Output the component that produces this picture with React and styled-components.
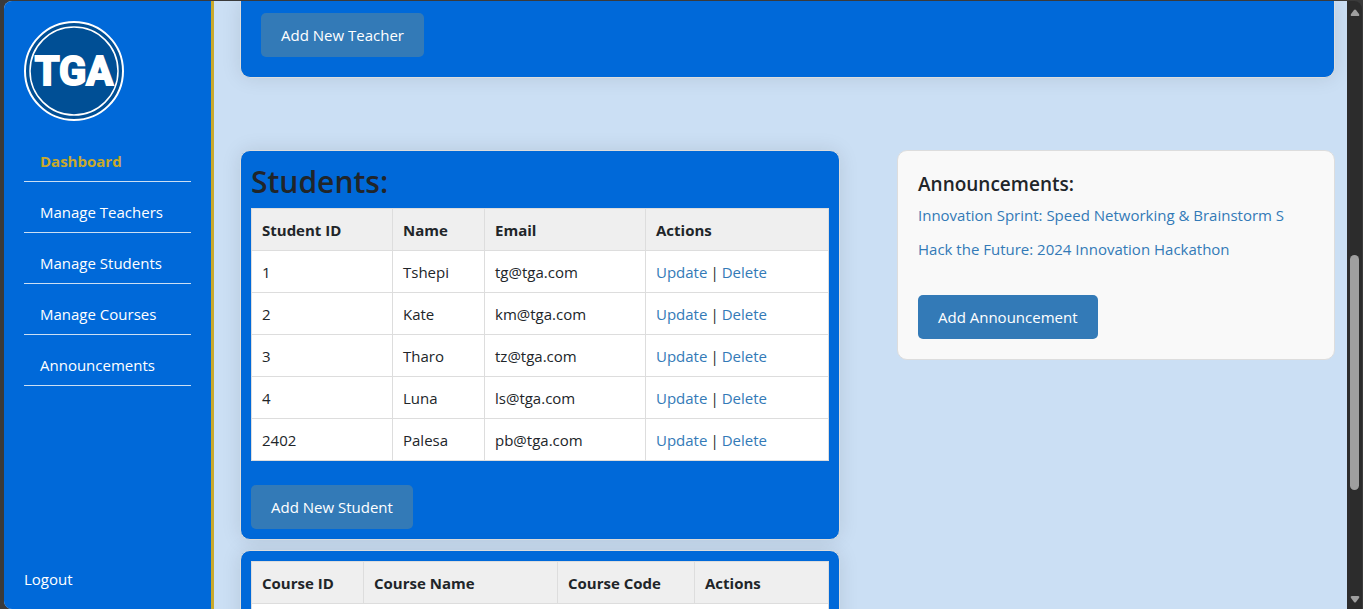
import React from "react";
import styled, { createGlobalStyle } from "styled-components";

const GlobalStyle = createGlobalStyle`
  *, *::before, *::after { box-sizing: border-box; }
  body {
    margin: 0;
    background: #3a3a3a;
    color: #212529;
    font-family: "Segoe UI", "Open Sans", "Noto Sans", sans-serif;
    font-size: 15px;
    line-height: 24px;
  }
`;

const Shell = styled.div`
  display: flex;
  height: 100vh;
  padding: 1px 1px 0 4px;
  overflow: hidden;
`;

const Page = styled.div`
  display: flex;
  flex: 1;
  min-width: 0;
  overflow: hidden;
  background: #cbdff4;
  border-radius: 8px 0 0 8px;
`;

const Sidebar = styled.aside`
  display: flex;
  flex-direction: column;
  flex: none;
  width: 210px;
  padding: 20px 20px 18px;
  background: #0069d9;
  border-right: 3px solid #c9a92c;
`;

const Logo = styled.svg`
  width: 100px;
  height: 100px;
  margin-bottom: 20px;
`;

const LogoText = styled.text`
  fill: #fff;
  stroke: #fff;
  stroke-width: 2px;
  font-family: "Roboto", "Liberation Sans", sans-serif;
  font-size: 40px;
  font-weight: 700;
  text-anchor: middle;
`;

const Nav = styled.nav`
  display: flex;
  flex-direction: column;
  flex: 1;
  gap: 10px;
`;

const NavLink = styled.a`
  padding: 8px 16px;
  border-bottom: 1px solid #cbdff4;
  color: ${({ $active }) => ($active ? "#c9a92c" : "#fff")};
  font-weight: ${({ $active }) => ($active ? 700 : 400)};
  text-decoration: none;
`;

const Logout = styled.a`
  color: #fff;
  text-decoration: none;
`;

const Main = styled.main`
  display: flex;
  flex-direction: column;
  flex: 1;
  min-width: 0;
  gap: 72px;
  padding: 0 12px 0 26px;
  overflow: hidden;
`;

const Card = styled.section`
  padding: 10px;
  background: #0069d9;
  border: 1px solid #ddd;
  border-radius: 10px;
  box-shadow: 0 0 20px rgba(0, 0, 0, 0.1);
`;

const TeachersCard = styled(Card)`
  padding: 12px 20px 20px;
  border-top: 0;
  border-radius: 0 0 10px 10px;
`;

const Columns = styled.div`
  display: grid;
  grid-template-columns: 300fr 219fr;
  gap: 57px;
  align-items: start;
`;

const Stack = styled.div`
  display: flex;
  flex-direction: column;
  gap: 10px;
`;

const Title = styled.h2`
  margin: 0 0 6px;
  font-size: 30px;
  font-weight: 600;
  line-height: 41px;
`;

const Table = styled.table`
  width: 100%;
  margin-bottom: 24px;
  table-layout: fixed;
  border-collapse: collapse;
  background: #fff;
`;

const Cell = styled.td`
  height: 42px;
  padding: 8px 10px;
  border: 1px solid #ddd;
  text-align: left;
`;

const HeadCell = styled(Cell)`
  background: #efefef;
  font-weight: 700;
`;

const Col = styled.col`
  width: ${({ $width }) => ($width ? `${$width}px` : "auto")};
`;

const RowActions = styled.div`
  display: flex;
  gap: 3px;
`;

const TextLink = styled.a`
  color: #337ab7;
  text-decoration: none;
`;

const Button = styled.button`
  padding: 10px 20px;
  border: 0;
  border-radius: 5px;
  background: #337ab7;
  color: #fff;
  font: inherit;
  cursor: pointer;
`;

const Announcements = styled.section`
  padding: 20px;
  background: #f9f9f9;
  border: 1px solid #ddd;
  border-radius: 10px;
`;

const Subtitle = styled.h3`
  margin: 0 0 6px;
  font-size: 19px;
  font-weight: 600;
  line-height: 26px;
`;

const NewsList = styled.ul`
  display: flex;
  flex-direction: column;
  gap: 10px;
  margin: 0 0 34px;
  padding: 0;
  list-style: none;
  white-space: nowrap;
`;

const ScrollTrack = styled.div`
  display: flex;
  flex-direction: column;
  align-items: center;
  flex: none;
  width: 15px;
  padding: 8px 0 6px;
  background: #2c2c2c;
  border-radius: 0 8px 0 0;
`;

const Arrow = styled.svg`
  flex: none;
  width: 10px;
  height: 7px;
  fill: #9f9f9f;
`;

const ThumbArea = styled.div`
  display: flex;
  flex-direction: column;
  flex: 1;
`;

const ThumbSpace = styled.div`
  flex: ${({ $share }) => $share} 1 0;
`;

const Thumb = styled(ThumbSpace)`
  width: 9px;
  border-radius: 5px;
  background: #9f9f9f;
`;

const navItems = ["Dashboard", "Manage Teachers", "Manage Students", "Manage Courses", "Announcements"];

const students = [
  ["1", "Tshepi", "tg@tga.com"],
  ["2", "Kate", "km@tga.com"],
  ["3", "Tharo", "tz@tga.com"],
  ["4", "Luna", "ls@tga.com"],
  ["2402", "Palesa", "pb@tga.com"],
];

const news = [
  "Innovation Sprint: Speed Networking & Brainstorm S",
  "Hack the Future: 2024 Innovation Hackathon",
];

function TgaLogo() {
  return (
    <Logo viewBox="0 0 100 100" role="img" aria-label="TGA">
      <circle cx="50" cy="50" r="49" fill="#004f95" stroke="#fff" strokeWidth="2" />
      <circle cx="50" cy="50" r="44" fill="none" stroke="#fff" strokeWidth="1.5" />
      <LogoText x="50" y="64">TGA</LogoText>
    </Logo>
  );
}

function DataTable({ headings, widths, children }) {
  return (
    <Table>
      <colgroup>
        {widths.map((width, i) => <Col key={i} $width={width} />)}
      </colgroup>
      <thead>
        <tr>
          {headings.map((h) => <HeadCell as="th" scope="col" key={h}>{h}</HeadCell>)}
        </tr>
      </thead>
      <tbody>{children}</tbody>
    </Table>
  );
}

export default function App() {
  return (
    <>
      <GlobalStyle />
      <Shell>
        <Page>
          <Sidebar>
            <TgaLogo />
            <Nav>
              {navItems.map((item, i) => (
                <NavLink key={item} href="#" $active={i === 0}>{item}</NavLink>
              ))}
            </Nav>
            <Logout href="#">Logout</Logout>
          </Sidebar>
          <Main>
            <TeachersCard>
              <Button type="button">Add New Teacher</Button>
            </TeachersCard>
            <Columns>
              <Stack>
                <Card>
                  <Title>Students:</Title>
                  <DataTable headings={["Student ID", "Name", "Email", "Actions"]} widths={[141, 92, 161, 0]}>
                    {students.map((row) => (
                      <tr key={row[0]}>
                        {row.map((value) => <Cell key={value}>{value}</Cell>)}
                        <Cell>
                          <RowActions>
                            <TextLink href="#">Update</TextLink>
                            <span>|</span>
                            <TextLink href="#">Delete</TextLink>
                          </RowActions>
                        </Cell>
                      </tr>
                    ))}
                  </DataTable>
                  <Button type="button">Add New Student</Button>
                </Card>
                <Card>
                  <DataTable headings={["Course ID", "Course Name", "Course Code", "Actions"]} widths={[112, 194, 137, 0]}>
                    <tr>
                      <Cell colSpan={4} />
                    </tr>
                  </DataTable>
                </Card>
              </Stack>
              <Announcements>
                <Subtitle>Announcements:</Subtitle>
                <NewsList>
                  {news.map((item) => (
                    <li key={item}><TextLink href="#">{item}</TextLink></li>
                  ))}
                </NewsList>
                <Button type="button">Add Announcement</Button>
              </Announcements>
            </Columns>
          </Main>
        </Page>
        <ScrollTrack>
          <Arrow viewBox="0 0 10 7"><path d="M4 1Q5 0 6 1L9 5Q10 7 8 7H2Q0 7 1 5Z" /></Arrow>
          <ThumbArea>
            <ThumbSpace $share={239} />
            <Thumb $share={235} />
            <ThumbSpace $share={106} />
          </ThumbArea>
          <Arrow viewBox="0 0 10 7"><path d="M4 6Q5 7 6 6L9 2Q10 0 8 0H2Q0 0 1 2Z" /></Arrow>
        </ScrollTrack>
      </Shell>
    </>
  );
}
